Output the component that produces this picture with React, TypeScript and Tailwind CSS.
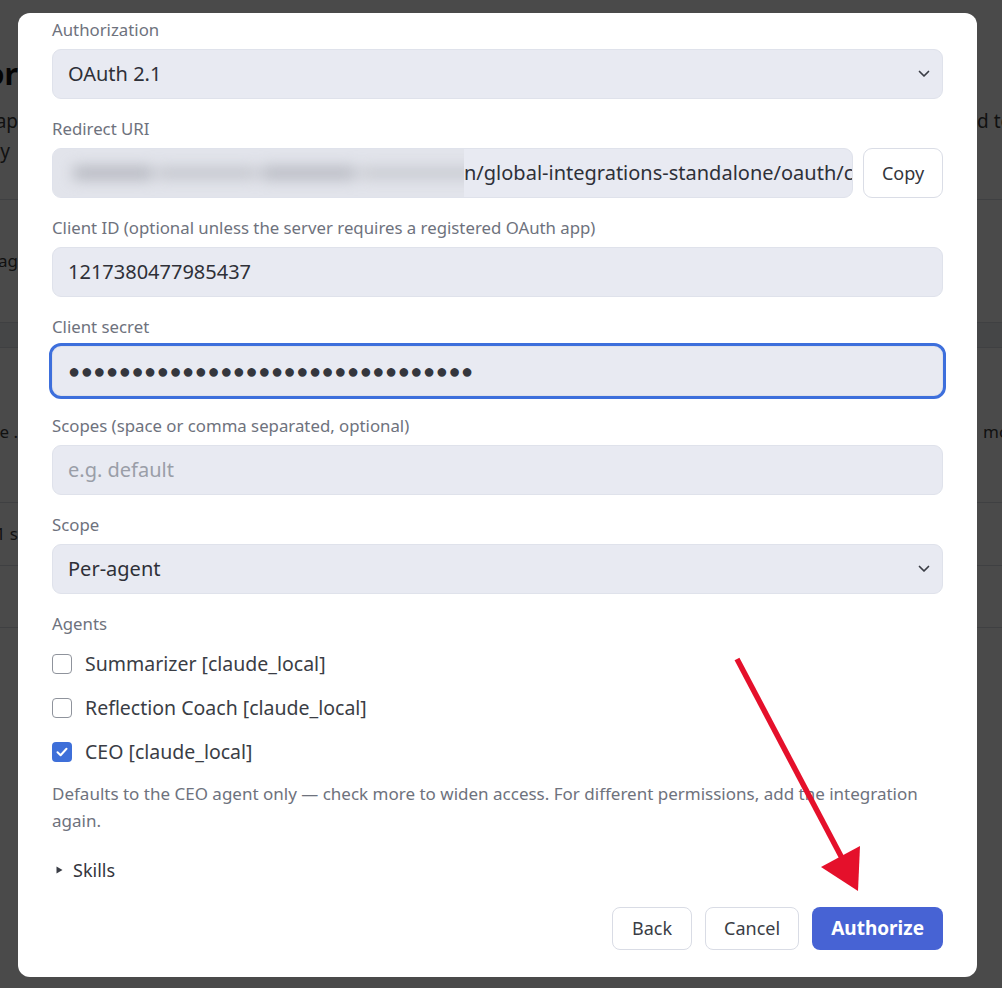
import React from "react";

const font = { fontFamily: '"Noto Sans", "Open Sans", Arial, sans-serif' };

function Chevron() {
  return (
    <svg width="12" height="8" viewBox="0 0 12 8" fill="none" className="shrink-0">
      <path d="M1.5 1.5L6 6L10.5 1.5" stroke="#3a3d45" strokeWidth="1.7" strokeLinecap="round" strokeLinejoin="round" />
    </svg>
  );
}

function Label({ children }: { children: React.ReactNode }) {
  return <div className="text-[16.8px] leading-[22px] text-[#6e727d] whitespace-nowrap">{children}</div>;
}

function Field({ label, children }: { label: string; children: React.ReactNode }) {
  return (
    <div className="flex flex-col gap-[8px] mb-[19px]">
      <Label>{label}</Label>
      {children}
    </div>
  );
}

const shell =
  "h-[50px] w-full flex items-center rounded-[9px] bg-[#e8eaf2] border border-[#dfe2eb] text-[20px] text-[#2e3038]";
const boxBase = shell + " px-[15px]";

function SelectBox({ value }: { value: string }) {
  return (
    <div className={shell + " justify-between pl-[15px] pr-[12px]"}>
      <span>{value}</span>
      <Chevron />
    </div>
  );
}

function Check({ checked, label }: { checked?: boolean; label: string }) {
  return (
    <div className="h-[44px] flex items-center gap-[13px]">
      {checked ? (
        <span className="w-[20px] h-[20px] rounded-[4px] bg-[#3e6fd9] flex items-center justify-center">
          <svg width="14" height="14" viewBox="0 0 14 14" fill="none">
            <path d="M2.5 7.3L5.6 10.2L11.5 3.8" stroke="white" strokeWidth="2" strokeLinecap="round" strokeLinejoin="round" />
          </svg>
        </span>
      ) : (
        <span className="w-[20px] h-[20px] rounded-[4px] bg-white border-[1.5px] border-[#8f939c]" />
      )}
      <span className="text-[19.5px] text-[#3a3d45] whitespace-nowrap">{label}</span>
    </div>
  );
}

/* Strip of the page that shows at the left / right edge behind the dialog */
function PageRow({
  h,
  left,
  right,
  leftClass = "",
  rightClass = "",
  border = true,
  tint = false,
  extra = "",
}: {
  h: string;
  left?: string;
  right?: string;
  leftClass?: string;
  rightClass?: string;
  border?: boolean;
  tint?: boolean;
  extra?: string;
}) {
  return (
    <div className={`${h} flex items-center justify-between ${border ? "border-b border-[#d9dce3]" : ""} ${tint ? "bg-[#eef0f4]" : ""} ${extra}`}>
      <div className="w-[18px] flex justify-end overflow-hidden">
        <span className={`whitespace-nowrap ${leftClass}`}>{left}</span>
      </div>
      <div className="w-[25px] flex justify-start overflow-hidden">
        <span className={`whitespace-nowrap ${rightClass}`}>{right}</span>
      </div>
    </div>
  );
}

export default function App() {
  return (
    <div className="relative w-full h-[988px] overflow-hidden bg-white" style={font}>
      {/* page underneath */}
      <div className="flex flex-col">
        <div className="h-[50px]" />
        <PageRow h="h-[46px]" left="Connector" leftClass="text-[30px] font-bold text-[#111]" border={false} />
        <div className="h-[104px] flex flex-col justify-start pt-[10px] border-b border-[#d9dce3]">
          <PageRow h="h-[30px]" left="Connect ap" right="d to" leftClass="text-[19px] text-[#3c3c3c]" rightClass="text-[19px] text-[#3c3c3c]" border={false} />
          <PageRow h="h-[30px]" left="only" leftClass="text-[19px] text-[#3c3c3c] pr-[8px]" border={false} />
        </div>
        <PageRow h="h-[123px]" left="Manag" leftClass="text-[17px] text-[#3c3c3c]" />
        <PageRow h="h-[25px]" tint />
        <PageRow h="h-[155px]" extra="pt-[14px]" left="Use ." right="more" leftClass="text-[17px] text-[#3c3c3c]" rightClass="text-[17px] text-[#3c3c3c] pl-[6px]" />
        <PageRow h="h-[63px]" left="1 s" leftClass="text-[17px] text-[#3c3c3c]" />
        <PageRow h="h-[62px]" />
      </div>

      {/* dim layer + dialog */}
      <div className="absolute inset-0 bg-black/[0.71] pt-[13px] pl-[18px]">
        <div className="w-[959px] h-[964px] bg-white rounded-[12px] flex flex-col px-[34px] pt-[6px] pb-[27px]">
          <Field label="Authorization">
            <SelectBox value="OAuth 2.1" />
          </Field>

          <Field label="Redirect URI">
            <div className="flex gap-[10px]">
              <div className={shell + " flex-1 min-w-0 overflow-hidden"}>
                <div className="w-[411px] h-full shrink-0 overflow-hidden flex items-center pl-[20px] bg-[#e2e4eb]">
                  <div className="flex gap-[4px] items-center blur-[7px]">
                    <span className="w-[80px] h-[14px] bg-[#b7b9c1] rounded" />
                    <span className="w-[100px] h-[12px] bg-[#c3c5cc] rounded" />
                    <span className="w-[95px] h-[14px] bg-[#babcc4] rounded" />
                    <span className="w-[130px] h-[12px] bg-[#c8cad0] rounded" />
                  </div>
                </div>
                <span className="whitespace-nowrap">n/global-integrations-standalone/oauth/callback</span>
              </div>
              <div className="w-[80px] h-[50px] shrink-0 rounded-[9px] bg-white border border-[#dadde6] flex items-center justify-center text-[18px] text-[#33353c]">
                Copy
              </div>
            </div>
          </Field>

          <Field label="Client ID (optional unless the server requires a registered OAuth app)">
            <div className={boxBase}>1217380477985437</div>
          </Field>

          <Field label="Client secret">
            <div className={boxBase + " outline-[3px] outline-solid outline-[#3d6fdc] outline-offset-0 text-[#34363d] tracking-[0.6px]"}>
              {"●".repeat(32)}
            </div>
          </Field>

          <Field label="Scopes (space or comma separated, optional)">
            <div className={boxBase + " text-[#9a9ea8]"}>e.g. default</div>
          </Field>

          <Field label="Scope">
            <SelectBox value="Per-agent" />
          </Field>

          <Label>Agents</Label>
          <div className="flex flex-col mt-[7px]">
            <Check label="Summarizer [claude_local]" />
            <Check label="Reflection Coach [claude_local]" />
            <Check checked label="CEO [claude_local]" />
          </div>

          <p className="mt-[6px] text-[17px] leading-[27px] text-[#6e727d]">
            Defaults to the CEO agent only — check more to widen access. For different permissions, add the integration again.
          </p>

          <div className="mt-[24px] h-[24px] flex items-center gap-[10px] pl-[4px] text-[18px] text-[#33353c]">
            <svg width="7" height="8" viewBox="0 0 7 8">
              <path d="M0.5 0.5L6.5 4L0.5 7.5Z" fill="#3a3d45" />
            </svg>
            <span>Skills</span>
          </div>

          <div className="mt-[25px] flex justify-end gap-[13px]">
            <div className="h-[43px] px-[19px] rounded-[8px] bg-white border border-[#d9dce5] flex items-center text-[18px] text-[#3a3d45]">
              Back
            </div>
            <div className="h-[43px] px-[18px] rounded-[8px] bg-white border border-[#d9dce5] flex items-center text-[18px] text-[#3a3d45]">
              Cancel
            </div>
            <div className="h-[43px] px-[19px] rounded-[8px] bg-[#4763d4] flex items-center text-[19px] font-bold text-white">
              Authorize
            </div>
          </div>
        </div>
      </div>

      {/* red pointer arrow drawn over the dialog */}
      <svg className="absolute inset-0 pointer-events-none" width="1002" height="988" viewBox="0 0 1002 988">
        <line x1="737" y1="659" x2="843" y2="860" stroke="#e5102b" strokeWidth="5.5" />
        <polygon points="821,867 860,846 858,891" fill="#e5102b" />
      </svg>
    </div>
  );
}
